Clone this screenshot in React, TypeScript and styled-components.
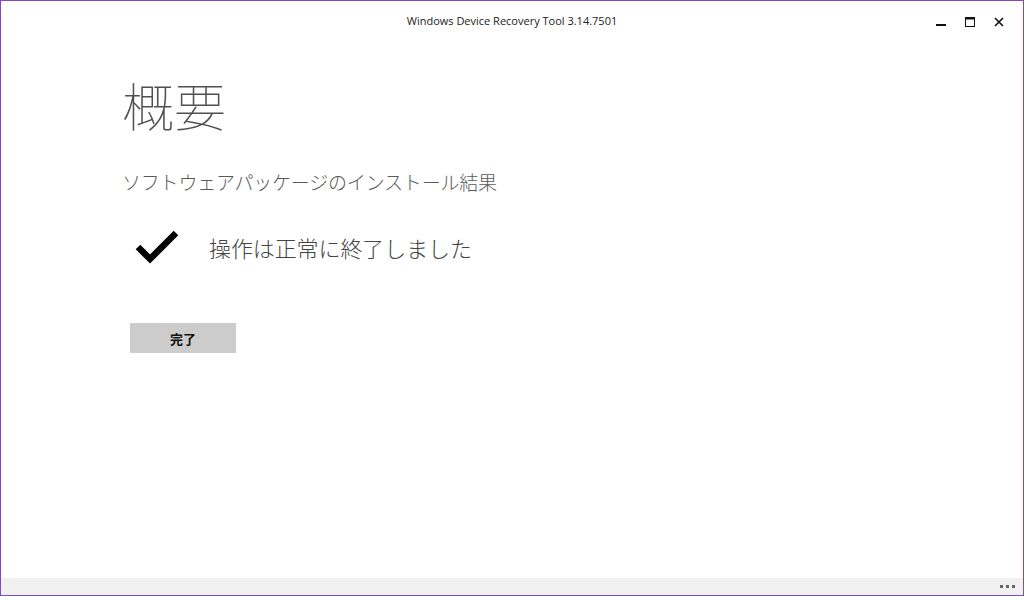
import React from 'react'
import styled, { createGlobalStyle } from 'styled-components'

const GlobalStyle = createGlobalStyle`
  html, body {
    margin: 0;
    padding: 0;
    background: #ffffff;
  }
  * {
    box-sizing: border-box;
  }
`

const jp = `"Noto Sans CJK JP", "Noto Sans", sans-serif`

const Window = styled.div`
  width: 1024px;
  height: 596px;
  border: 1px solid #8048bd;
  display: flex;
  flex-direction: column;
  background: #ffffff;
  font-family: "Open Sans", "Noto Sans", ${jp};
`

const TitleBar = styled.div`
  height: 32px;
  flex: none;
  display: grid;
  grid-template-columns: 1fr auto 1fr;
  align-items: center;
`

const Title = styled.div`
  grid-column: 2;
  font-size: 11px;
  color: #222;
  padding-top: 6px;
`

const Caption = styled.div`
  grid-column: 3;
  justify-self: end;
  display: flex;
  height: 100%;
  padding-right: 10px;
`

const CaptionButton = styled.div`
  width: 29px;
  height: 100%;
  display: flex;
  align-items: center;
  justify-content: center;
  padding-top: 10px;
`

const Content = styled.main`
  flex: 1;
  padding: 40px 0 0 121px;
  display: flex;
  flex-direction: column;
  align-items: flex-start;
`

const Heading = styled.h1`
  margin: 0;
  font-family: ${jp};
  font-weight: 100;
  font-size: 52px;
  line-height: 64px;
  color: #505050;
`

const Subtitle = styled.h2`
  margin: 31px 0 0 0;
  font-family: ${jp};
  font-weight: 300;
  font-size: 19px;
  line-height: 28px;
  color: #5a5a5a;
  letter-spacing: -0.2px;
`

const ResultRow = styled.div`
  margin-top: 34px;
  display: flex;
  align-items: center;
  gap: 30px;
  padding-left: 13px;
`

const ResultText = styled.div`
  font-family: ${jp};
  font-weight: 300;
  font-size: 22px;
  line-height: 32px;
  color: #444444;
  letter-spacing: -0.1px;
`

const DoneButton = styled.button`
  margin: 59px 0 0 8px;
  width: 106px;
  height: 30px;
  border: none;
  background: #cccccc;
  font-family: ${jp};
  font-weight: 700;
  font-size: 13px;
  color: #111;
  display: flex;
  align-items: center;
  justify-content: center;
  padding: 0;
`

const BottomBar = styled.div`
  height: 17px;
  flex: none;
  background: #f1f1f1;
  display: flex;
  align-items: center;
  justify-content: flex-end;
  padding-right: 8px;
`

const Dots = styled.div`
  display: flex;
  gap: 3px;
`

const Dot = styled.span`
  width: 3px;
  height: 3px;
  background: #666;
`

const CheckIcon = () => (
  <svg width="44" height="34" viewBox="0 0 44 34">
    <path d="M3 17 L15 29 L41 3" fill="none" stroke="#000" strokeWidth="6.5" strokeLinejoin="miter" />
  </svg>
)

export default function App() {
  return (
    <>
      <GlobalStyle />
      <Window>
        <TitleBar>
          <Title>Windows Device Recovery Tool 3.14.7501</Title>
          <Caption>
            <CaptionButton>
              <svg width="10" height="10" viewBox="0 0 10 10">
                <rect x="0" y="7" width="10" height="2" fill="#111" />
              </svg>
            </CaptionButton>
            <CaptionButton>
              <svg width="10" height="10" viewBox="0 0 10 10">
                <rect x="0.5" y="0.5" width="9" height="9" fill="none" stroke="#111" strokeWidth="1" />
                <rect x="0" y="0" width="10" height="2.5" fill="#111" />
              </svg>
            </CaptionButton>
            <CaptionButton>
              <svg width="10" height="10" viewBox="0 0 10 10">
                <path d="M1 1 L9 9 M9 1 L1 9" stroke="#111" strokeWidth="1.6" />
              </svg>
            </CaptionButton>
          </Caption>
        </TitleBar>
        <Content>
          <Heading>概要</Heading>
          <Subtitle>ソフトウェアパッケージのインストール結果</Subtitle>
          <ResultRow>
            <CheckIcon />
            <ResultText>操作は正常に終了しました</ResultText>
          </ResultRow>
          <DoneButton>完了</DoneButton>
        </Content>
        <BottomBar>
          <Dots>
            <Dot />
            <Dot />
            <Dot />
          </Dots>
        </BottomBar>
      </Window>
    </>
  )
}
